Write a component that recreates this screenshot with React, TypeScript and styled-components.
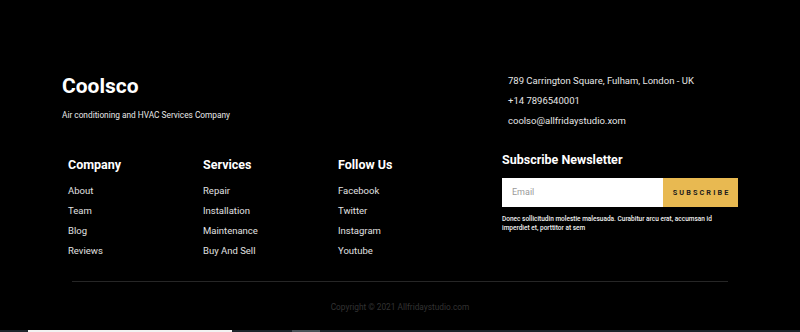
import styled, { createGlobalStyle } from "styled-components";

const GlobalStyle = createGlobalStyle`
	html, body {
		margin: 0;
		padding: 0;
		background: #000;
		overflow: hidden;
	}
	* {
		box-sizing: border-box;
	}
`;

const Page = styled("div")`
	width: 800px;
	height: 332px;
	display: flex;
	flex-direction: column;
	background-color: #000;
	font-family: Roboto, "Liberation Sans", sans-serif;
	color: #fff;
`;

const Footer = styled("footer")`
	height: 330px;
	padding-top: 71px;
	display: flex;
	flex-direction: column;
`;

const Main = styled("div")`
	display: grid;
	grid-template-columns: 440px 236px;
	grid-template-rows: auto auto;
	row-gap: 21px;
	padding: 0 62px;
`;

const Brand = styled("div")`
	margin-top: 3px;
`;

const Logo = styled("h2")`
	margin: 0;
	font-size: 21px;
	line-height: 25px;
	font-weight: 700;
`;

const Tagline = styled("p")`
	margin: 10px 0 0;
	font-size: 8.3px;
	line-height: 12px;
	color: #e8e8e8;
`;

const Contact = styled("ul")`
	margin: 0;
	padding: 0 0 0 6px;
	list-style: none;
	font-size: 9.5px;
	line-height: 20px;
	color: #e6e6e6;
`;

const Columns = styled("div")`
	display: grid;
	grid-template-columns: repeat(3, 135px);
	padding: 5px 0 0 6px;
`;

const Heading = styled("h3")`
	margin: 0;
	font-size: 12.5px;
	line-height: 16px;
	font-weight: 700;
`;

const Links = styled("ul")`
	margin: 7.5px 0 0;
	padding: 0;
	list-style: none;
	font-size: 9.5px;
	line-height: 20px;
	color: #e0e0e0;
`;

const Newsletter = styled("div")`
	display: flex;
	flex-direction: column;
`;

const Form = styled("form")`
	display: flex;
	height: 29px;
	margin-top: 9.5px;
`;

const EmailInput = styled("input")`
	flex: 1;
	min-width: 0;
	border: none;
	outline: none;
	padding: 0 10px;
	background: #fff;
	font-family: inherit;
	font-size: 9px;
	color: #333;
	&::placeholder {
		color: #9a9a9a;
	}
`;

const SubscribeButton = styled("button")`
	width: 75px;
	border: none;
	background: #e8b951;
	color: #1c1c1c;
	font-family: inherit;
	font-size: 7.3px;
	font-weight: 700;
	letter-spacing: 2.1px;
	text-transform: uppercase;
	padding: 0 0 0 2px;
`;

const Note = styled("p")`
	margin: 8.5px 0 0;
	font-size: 6.5px;
	line-height: 9px;
	font-weight: 500;
	color: #f0f0f0;
`;

const Divider = styled("hr")`
	margin: 20px 72px 0;
	border: none;
	border-top: 1px solid #262626;
	height: 0;
`;

const Copyright = styled("p")`
	margin: 19px 0 0;
	text-align: center;
	font-size: 8.3px;
	line-height: 12px;
	color: #333;
`;

const Strip = styled("div")`
	height: 2px;
	display: flex;
	background: #1c262c;
`;

const Segment = styled("span")<{ $offset: number; $width: number; $color: string }>`
	margin-left: ${({ $offset }) => $offset}px;
	width: ${({ $width }) => $width}px;
	background: ${({ $color }) => $color};
`;

const columns = [
	{ title: "Company", links: ["About", "Team", "Blog", "Reviews"] },
	{ title: "Services", links: ["Repair", "Installation", "Maintenance", "Buy And Sell"] },
	{ title: "Follow Us", links: ["Facebook", "Twitter", "Instagram", "Youtube"] },
];

const App = () => {
	return (
		<>
			<GlobalStyle />
			<Page>
				<Footer>
					<Main>
						<Brand>
							<Logo>Coolsco</Logo>
							<Tagline>Air conditioning and HVAC Services Company</Tagline>
						</Brand>
						<Contact>
							<li>789 Carrington Square, Fulham, London - UK</li>
							<li>+14 7896540001</li>
							<li>coolso@allfridaystudio.xom</li>
						</Contact>
						<Columns>
							{columns.map((col) => (
								<div key={col.title}>
									<Heading>{col.title}</Heading>
									<Links>
										{col.links.map((link) => (
											<li key={link}>{link}</li>
										))}
									</Links>
								</div>
							))}
						</Columns>
						<Newsletter>
							<Heading>Subscribe Newsletter</Heading>
							<Form onSubmit={(e) => e.preventDefault()}>
								<EmailInput type="email" placeholder="Email" />
								<SubscribeButton type="submit">Subscribe</SubscribeButton>
							</Form>
							<Note>
								Donec sollicitudin molestie malesuada. Curabitur arcu erat, accumsan id
								imperdiet et, porttitor at sem
							</Note>
						</Newsletter>
					</Main>
					<Divider />
					<Copyright>Copyright © 2021 Allfridaystudio.com</Copyright>
				</Footer>
				<Strip>
					<Segment $offset={28} $width={204} $color="#f2f2f2" />
					<Segment $offset={60} $width={28} $color="#4a5359" />
				</Strip>
			</Page>
		</>
	);
};

export default App;
